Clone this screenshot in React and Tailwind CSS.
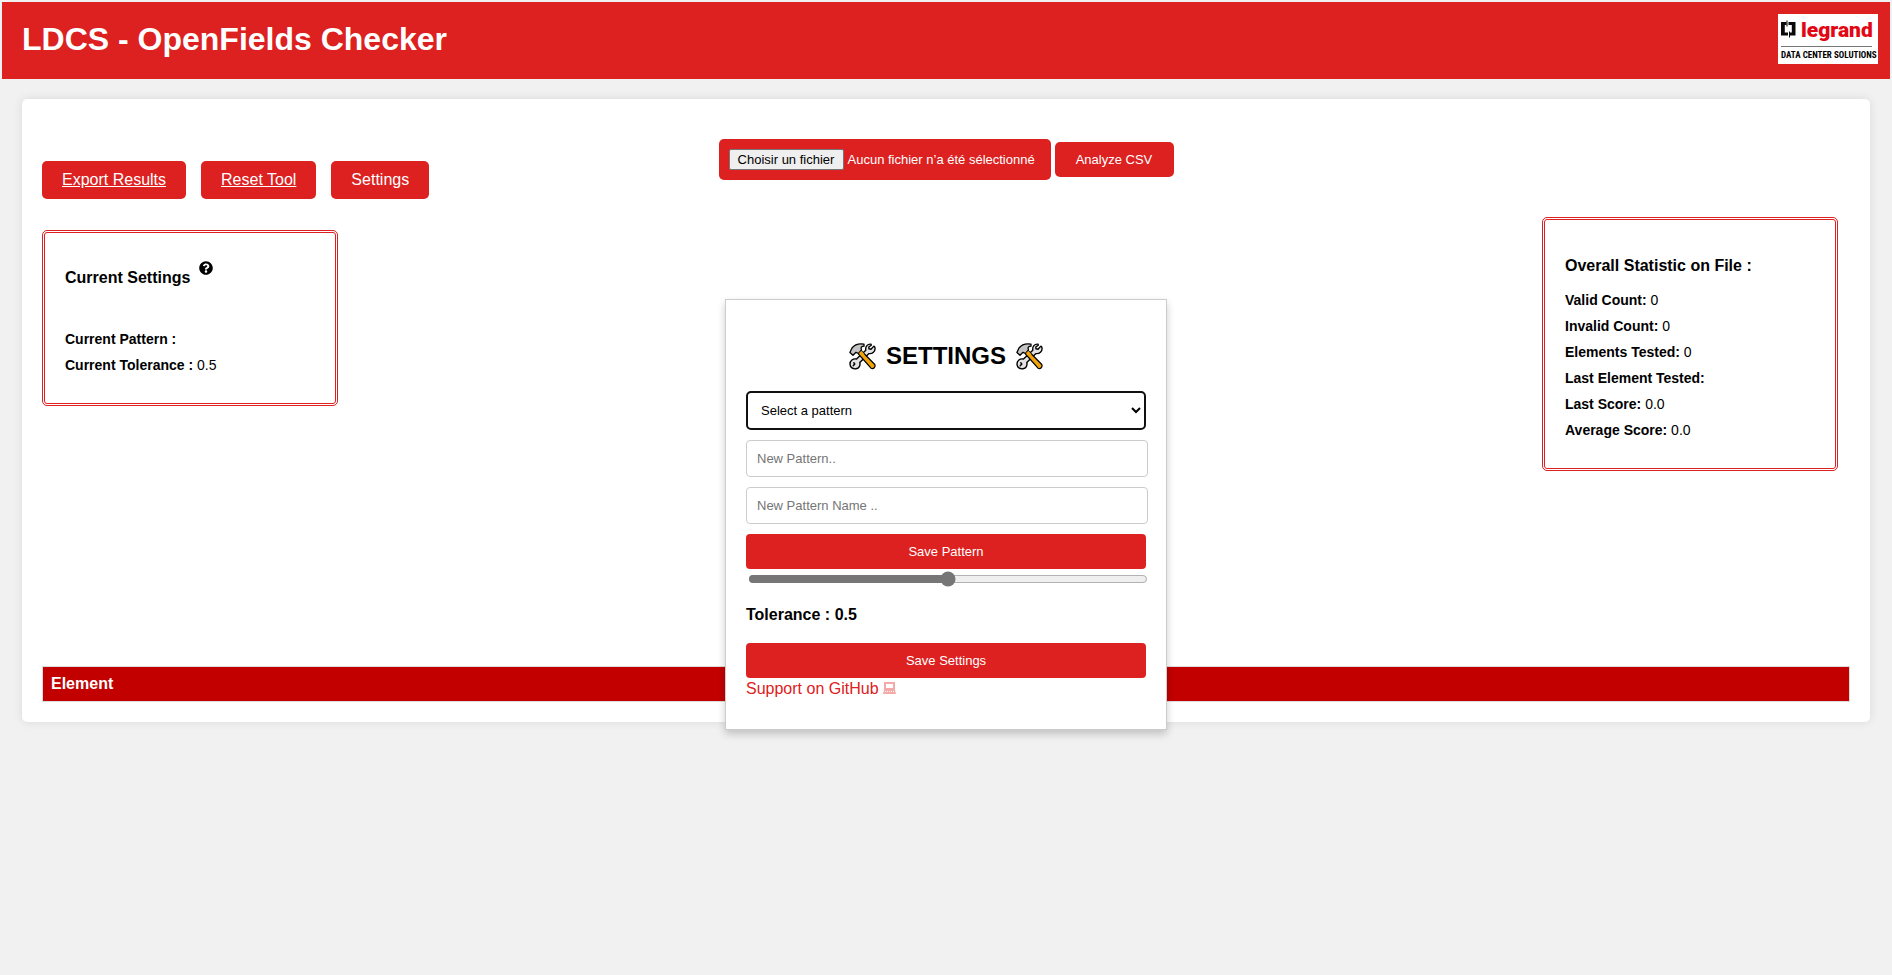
import { useState } from "react";

function LegrandLogo() {
  return (
    <div className="flex h-[50px] w-[100px] flex-col bg-white px-[3px] pt-[6px]">
      <div className="flex items-start gap-[5px]">
        <svg width="15" height="18" viewBox="0 0 15 18" aria-hidden="true">
          <path d="M0 2H5.500V5H3.800V12.500H7V15.500H0Z" fill="#0a0a0a" />
          <path d="M7.500 2H14.500V15.500H9V12.500H10.800V5H7.500Z" fill="#0a0a0a" />
          <path d="M6 .5V6.500M8.500 11.500V17.500" stroke="#0a0a0a" strokeWidth="1" />
        </svg>
        <span className="font-[Roboto,sans-serif] text-[21px] leading-[20px] font-black text-[#e30613]">legrand</span>
      </div>
      <div className="mt-[6px] h-px w-[91px] bg-[#777]" />
      <div className="mt-[3px] font-['Liberation_Sans_Narrow','Roboto_Condensed',Roboto,sans-serif] text-[9px] leading-[10px] font-bold whitespace-nowrap text-black">
        DATA CENTER SOLUTIONS
      </div>
    </div>
  );
}

function ToolsIcon() {
  return (
    <svg width="27" height="27" viewBox="0 0 27 27" strokeLinejoin="round" strokeLinecap="round" aria-hidden="true">
      <path
        d="M22 1.200C18.500 .8 16.200 3.500 16.800 7.200L7.500 16C4 15.200 .9 17.800 1 21.200C1.100 24.500 4 26.300 7 25.800C10.200 25.200 11.500 22.500 10.800 19.500L20 10.600C23.500 11 26.400 8.500 26 5C25.800 3.500 25 2.800 24.600 3.400L22 6.300L20 5.800L19.800 4L22.300 2.200Z"
        fill="#e2e2e2"
        stroke="#000"
        strokeWidth="1.400"
      />
      <path d="M4.200 22.800L5.800 21L4.800 19.800" fill="none" stroke="#000" strokeWidth="1.400" />
      <path d="M9.500 11L12.500 8L25.800 21.500C26.800 24 24.500 26.500 22 25.200Z" fill="#f0a30a" stroke="#000" strokeWidth="1.200" />
      <path
        d="M.9 9.500L3 5C5.500 1.800 10 .4 15 1.200L15 3.200C12.500 3.200 11.500 4.500 12.500 7L9.500 10.500L7 9.300L4 12.300Z"
        fill="#c4c4c4"
        stroke="#000"
        strokeWidth="1.300"
      />
      <path d="M9.800 10.200L12.300 7.800L15.500 11.200L13 13.700Z" fill="#f0a30a" />
    </svg>
  );
}

function LaptopIcon() {
  return (
    <svg className="inline-block align-baseline" width="13" height="12" viewBox="0 0 13 12" aria-hidden="true">
      <path d="M2 1H11V7H2Z" fill="#fff" stroke="#f4a9a9" strokeWidth="2" />
      <path d="M1 8H12L13 12H0Z" fill="#f4a9a9" />
      <path d="M2 9.500H11" stroke="#fff" strokeWidth="1" strokeDasharray="1 1" />
    </svg>
  );
}

function HelpIcon() {
  return (
    <svg className="mb-4" width="14" height="14" viewBox="0 0 512 512" role="img" aria-label="Help">
      <path d="M504 256c0 137-111 248-248 248S8 393 8 256C8 119.100 119 8 256 8s248 111.100 248 248zM262.700 90c-54.500 0-89.300 23-116.500 63.800-3.500 5.300-2.400 12.400 2.700 16.300l34.700 26.300c5.200 3.900 12.600 3 16.700-2.100 17.900-22.700 30.100-35.800 57.300-35.800 20.400 0 45.700 13.100 45.700 33 0 15-12.400 22.700-32.500 34C247.100 238.500 216 254.900 216 296v4c0 6.600 5.400 12 12 12h56c6.600 0 12-5.400 12-12v-1.300c0-28.500 83.200-29.600 83.200-106.700 0-58-60.200-102-116.500-102zM256 338c-25.400 0-46 20.600-46 46 0 25.400 20.600 46 46 46s46-20.600 46-46c0-25.400-20.600-46-46-46z" />
    </svg>
  );
}

function Stat({ label, value }) {
  return (
    <p>
      <strong>{label}</strong> {value}
    </p>
  );
}

const STATS = [
  ["Valid Count:", "0"],
  ["Invalid Count:", "0"],
  ["Elements Tested:", "0"],
  ["Last Element Tested:", ""],
  ["Last Score:", "0.0"],
  ["Average Score:", "0.0"],
];

const actionClass = "rounded-[5px] bg-[#dd2020] px-5 py-[10px] text-base leading-[18px] text-white";
const panelClass = "w-[296px] rounded-[5px] border-[3px] border-double border-[#dd2020] px-5 text-sm leading-[26px]";
const fieldClass =
  "h-[37px] w-[402px] rounded-[4px] border border-[#ccc] bg-white px-[10px] text-[13px] placeholder:text-[#757575]";
const saveClass = "h-[35px] w-full rounded-[4px] bg-[#dd2020] text-[13px] text-white";

function SettingsDialog() {
  const [tolerance, setTolerance] = useState(0.5);
  return (
    <div
      role="dialog"
      aria-labelledby="settings-title"
      className="absolute top-[299px] left-1/2 w-[442px] -translate-x-1/2 border border-[#ccc] bg-white px-5 pt-[42px] pb-[29px] shadow-[0_4px_8px_rgba(0,0,0,0.2)]"
    >
      <h2 id="settings-title" className="flex items-center justify-center gap-[10px] text-2xl leading-[28px] font-bold">
        <ToolsIcon />
        SETTINGS
        <ToolsIcon />
      </h2>
      <form className="mt-[21px]" onSubmit={(e) => e.preventDefault()}>
        <div className="flex flex-col gap-[10px]">
          <select
            aria-label="Pattern"
            className="h-[39px] w-full rounded-[5px] border-2 border-[#101010] bg-white px-[9px] text-[13px] outline-none"
          >
            <option>Select a pattern</option>
          </select>
          <input type="text" aria-label="New pattern" placeholder="New Pattern.." className={fieldClass} />
          <input type="text" aria-label="New pattern name" placeholder="New Pattern Name .." className={fieldClass} />
          <button type="button" className={saveClass}>Save Pattern</button>
        </div>
        <input
          id="tolerance"
          type="range"
          min="0"
          max="1"
          step="0.01"
          value={tolerance}
          onChange={(e) => setTolerance(Number(e.target.value))}
          className="mx-[2px] mt-[2px] block h-4 w-[400px] accent-[#767676]"
        />
        <label htmlFor="tolerance" className="mt-[18px] mb-[18px] block text-base leading-5 font-bold">
          Tolerance : {tolerance}
        </label>
        <button type="submit" className={saveClass}>Save Settings</button>
      </form>
      <a href="#github" className="block text-base leading-[22px] text-[#dd2020]">
        Support on GitHub <LaptopIcon />
      </a>
    </div>
  );
}

export default function App() {
  return (
    <div className="relative min-h-screen bg-[#f1f1f1] p-[2px] font-['Liberation_Sans',Arial,sans-serif] text-black">
      <header className="flex items-center justify-between bg-[#dd2020] pt-3 pr-3 pb-[15px] pl-5">
        <h1 className="text-[32px] leading-9 font-bold text-white">LDCS - OpenFields Checker</h1>
        <LegrandLogo />
      </header>

      <main className="m-5 rounded-[5px] bg-white p-5 shadow-[0_0_10px_rgba(0,0,0,0.1)]">
        <div className="grid grid-cols-[1fr_auto_1fr] items-start">
          <div className="pt-[42px]">
            <nav className="flex gap-[15px]">
              <a href="#export" className={actionClass + " underline"}>Export Results</a>
              <a href="#reset" className={actionClass + " underline"}>Reset Tool</a>
              <button type="button" className={actionClass}>Settings</button>
            </nav>
            <section className={panelClass + " mt-[31px] pt-[28px] pb-[25px]"}>
              <h3 className="flex h-[30px] items-end gap-[9px] text-base leading-[26px] font-bold">
                Current Settings
                <HelpIcon />
              </h3>
              <div className="mt-[35px]">
                <Stat label="Current Pattern :" value="" />
                <Stat label="Current Tolerance :" value="0.5" />
              </div>
            </section>
          </div>

          <form className="flex items-center gap-1 pt-5 text-[13px] text-white" onSubmit={(e) => e.preventDefault()}>
            <label className="flex h-[41px] w-[332px] items-center gap-1 rounded-[5px] bg-[#dd2020] px-[10px]">
              <input type="file" accept=".csv" className="sr-only" />
              <span className="flex h-[21px] w-[115px] items-center justify-center rounded-[2px] border border-[#767676] bg-[#efefef] text-black">
                Choisir un fichier
              </span>
              <span className="whitespace-nowrap">Aucun fichier n’a été sélectionné</span>
            </label>
            <button type="submit" className="h-[35px] w-[119px] rounded-[5px] bg-[#dd2020]">Analyze CSV</button>
          </form>

          <section className={panelClass + " mt-[98px] mr-3 justify-self-end pt-[33px] pb-[25px]"}>
            <h3 className="mb-2 text-base leading-[26px] font-bold">Overall Statistic on File :</h3>
            {STATS.map(([label, value]) => (
              <Stat key={label} label={label} value={value} />
            ))}
          </section>
        </div>

        <table className="mt-[195px] w-full border-collapse">
          <thead>
            <tr>
              <th className="border border-[#ddd] bg-[#c20000] p-2 text-left text-base leading-[18px] font-bold text-white">
                Element
              </th>
            </tr>
          </thead>
        </table>
      </main>

      <SettingsDialog />
    </div>
  );
}
